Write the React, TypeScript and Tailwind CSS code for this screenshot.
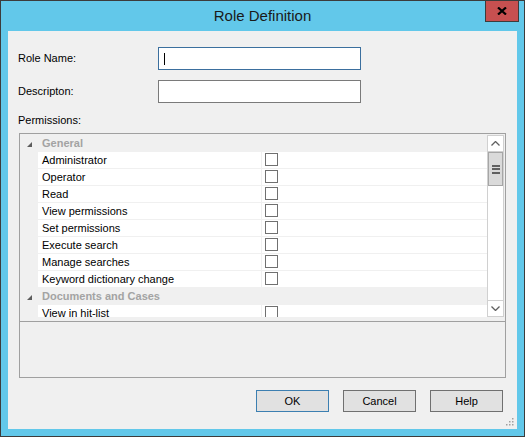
import React from "react";

const general = [
  "Administrator",
  "Operator",
  "Read",
  "View permissions",
  "Set permissions",
  "Execute search",
  "Manage searches",
  "Keyword dictionary change",
];

function Expander() {
  return (
    <svg width="5" height="5" viewBox="0 0 5 5" className="ml-[7px] mt-[2px] shrink-0">
      <polygon points="5,0 5,5 0,5" fill="#5c5c5c" />
    </svg>
  );
}

function CategoryRow({ title }: { title: string }) {
  return (
    <div className="flex h-[17px] shrink-0 items-center bg-[#f0f0f0]">
      <Expander />
      <span className="ml-[10px] text-[11px] font-bold text-[#a3a3a3]">{title}</span>
    </div>
  );
}

function ItemRow({ label }: { label: string }) {
  return (
    <div className="flex h-[17px] shrink-0">
      <div className="w-[18px] shrink-0 bg-[#f0f0f0]" />
      <div className="flex w-[223px] shrink-0 items-center border-b border-[#f0f0f0] bg-white pl-[4px] text-[11px] text-black">
        {label}
      </div>
      <div className="w-px shrink-0 bg-[#f0f0f0]" />
      <div className="flex-1 border-b border-[#f0f0f0] bg-white pl-[3px] pt-[1px]">
        <div className="h-[13px] w-[13px] border border-[#707070] bg-white" />
      </div>
    </div>
  );
}

function Scrollbar() {
  return (
    <div className="flex w-[17px] shrink-0 flex-col border border-[#d0d0d0] bg-white">
      <div className="flex h-[16px] items-center justify-center border-b border-[#d0d0d0]">
        <svg width="9" height="5" viewBox="0 0 9 5">
          <polyline points="0.5,4.5 4.5,0.5 8.5,4.5" fill="none" stroke="#606060" strokeWidth="1.3" />
        </svg>
      </div>
      <div className="flex h-[34px] flex-col items-center justify-center gap-[1.5px] border border-[#a6a6a6] bg-[#dadada]">
        <div className="h-[2px] w-[8px] bg-[#606060]" />
        <div className="h-[2px] w-[8px] bg-[#606060]" />
        <div className="h-[2px] w-[8px] bg-[#606060]" />
      </div>
      <div className="flex-1" />
      <div className="flex h-[16px] items-center justify-center border-t border-[#d0d0d0]">
        <svg width="9" height="5" viewBox="0 0 9 5">
          <polyline points="0.5,0.5 4.5,4.5 8.5,0.5" fill="none" stroke="#606060" strokeWidth="1.3" />
        </svg>
      </div>
    </div>
  );
}

function Button({ label, primary }: { label: string; primary?: boolean }) {
  return (
    <div
      className={
        "flex h-[22px] w-[73px] items-center justify-center border bg-[#e1e1e1] text-[11px] text-black " +
        (primary ? "border-[#3c7fb1]" : "border-[#707070]")
      }
    >
      {label}
    </div>
  );
}

export default function App() {
  return (
    <div
      className="relative flex h-[437px] w-[525px] flex-col border border-[#3c3c3c] bg-[#62c8ea]"
      style={{ fontFamily: '"Liberation Sans", Arial, sans-serif' }}
    >
      {/* title bar */}
      <div className="flex h-[30px] shrink-0 items-center justify-center pt-[1px] text-[15px] text-[#1a1a1a]">
        Role Definition
      </div>
      <div className="absolute right-[5px] top-[-1px] flex h-[22px] w-[34px] items-center justify-center border border-[#3c3c3c] bg-[#c75050]">
        <svg width="10" height="8" viewBox="0 0 10 8">
          <path d="M1 0.5 L9 7.5 M9 0.5 L1 7.5" stroke="#000" strokeWidth="2.2" />
        </svg>
      </div>

      {/* client area */}
      <div className="relative mx-[7px] flex h-[398px] shrink-0 flex-col bg-[#f0f0f0] px-[10px] pt-[16px] text-[11px] text-black">
        <div className="flex h-[23px] items-center">
          <span className="w-[140px]">Role Name:</span>
          <div className="flex h-[23px] w-[203px] items-center border border-[#3b6f9e] bg-white">
            <div className="ml-[5px] h-[12px] w-px bg-black" />
          </div>
        </div>
        <div className="mt-[10px] flex h-[23px] items-center">
          <span className="w-[140px]">Descripton:</span>
          <div className="h-[23px] w-[203px] border border-[#7a7a7a] bg-white" />
        </div>
        <div className="mt-[9px] flex h-[16px] items-center">Permissions:</div>

        <div className="ml-[1px] mr-[1px] mt-[5px] flex h-[245px] flex-col border border-[#a0a0a0] bg-[#f0f0f0]">
          <div className="flex h-[183px] shrink-0 pr-[1px] pt-[1px]">
            <div className="flex flex-1 flex-col overflow-hidden">
              <CategoryRow title="General" />
              {general.map((g) => (
                <ItemRow key={g} label={g} />
              ))}
              <CategoryRow title="Documents and Cases" />
              <ItemRow label="View in hit-list" />
            </div>
            <Scrollbar />
          </div>
          <div className="mt-[4px] flex-1 border-t border-[#a0a0a0]" />
        </div>

        <div className="mt-[12px] flex justify-end gap-[14px] pr-[4px]">
          <Button label="OK" primary />
          <Button label="Cancel" />
          <Button label="Help" />
        </div>

        {/* size grip */}
        <svg width="8" height="8" viewBox="0 0 8 8" className="absolute bottom-[3px] right-[3px]">
          <rect x="6" y="0" width="1.5" height="1.5" fill="#a0a0a0" />
          <rect x="3" y="3" width="1.5" height="1.5" fill="#a0a0a0" />
          <rect x="6" y="3" width="1.5" height="1.5" fill="#a0a0a0" />
          <rect x="0" y="6" width="1.5" height="1.5" fill="#a0a0a0" />
          <rect x="3" y="6" width="1.5" height="1.5" fill="#a0a0a0" />
          <rect x="6" y="6" width="1.5" height="1.5" fill="#a0a0a0" />
        </svg>
      </div>
    </div>
  );
}
